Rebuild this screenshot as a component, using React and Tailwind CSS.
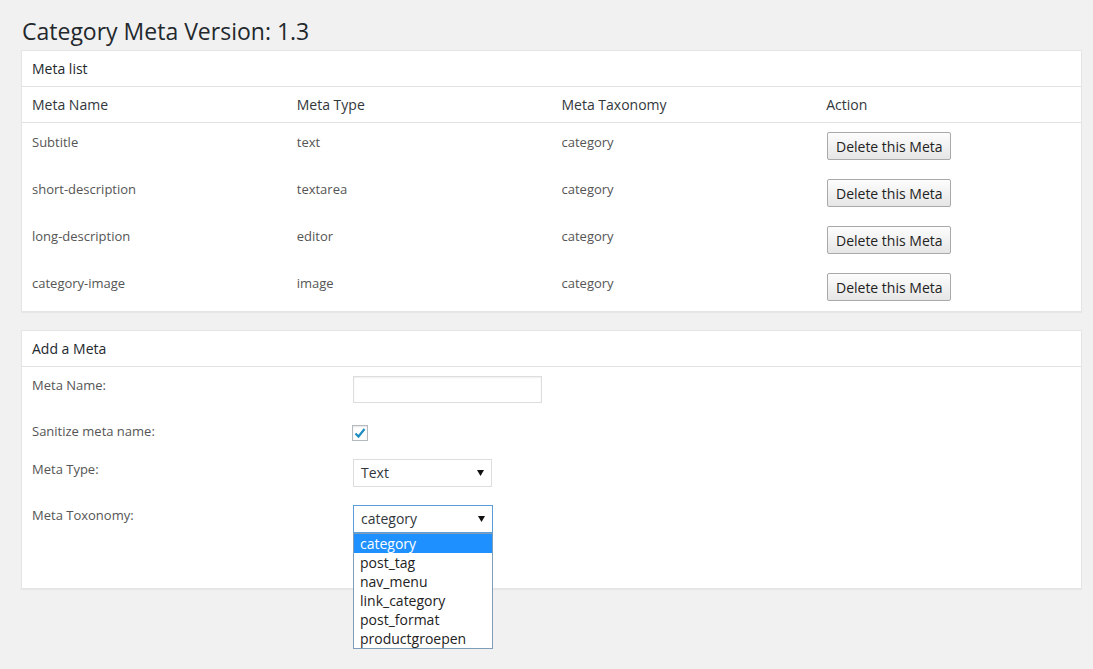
const metas = [
  { name: 'Subtitle', type: 'text', tax: 'category' },
  { name: 'short-description', type: 'textarea', tax: 'category' },
  { name: 'long-description', type: 'editor', tax: 'category' },
  { name: 'category-image', type: 'image', tax: 'category' },
]

const taxonomies = ['category', 'post_tag', 'nav_menu', 'link_category', 'post_format', 'productgroepen']

function Arrow() {
  return (
    <svg width="7" height="6" viewBox="0 0 7 6" className="shrink-0">
      <path d="M0 0 H7 L3.5 6 Z" fill="#111" />
    </svg>
  )
}

function Select({ value, focused, width, children }) {
  return (
    <div className="relative" style={{ width }}>
      <div
        className={`h-[28px] flex items-center justify-between pl-[7px] pr-[7px] bg-white text-[14px] text-[#32373c] border ${
          focused ? 'border-[#5b9dd9]' : 'border-[#ddd]'
        }`}
      >
        <span className="pt-px">{value}</span>
        <Arrow />
      </div>
      {children}
    </div>
  )
}

export default function App() {
  return (
    <div
      className="min-h-screen bg-[#f1f1f1] pl-[21px] pr-[11px] pb-10 text-[#555]"
      style={{ fontFamily: '"Open Sans", "Noto Sans", sans-serif' }}
    >
      <h1 className="pt-[14px] mb-[2px] text-[23px] leading-[34px] text-[#23282d] font-normal pl-px">
        Category Meta Version: 1.3
      </h1>

      {/* Meta list */}
      <div className="bg-white border border-[#e5e5e5] shadow-[0_1px_1px_rgba(0,0,0,0.04)]">
        <div className="h-[36px] border-b border-[#e1e1e1] pl-[10px] text-[14px] leading-[35px] text-[#23282d]">
          Meta list
        </div>
        <div className="grid grid-cols-4 h-[36px] border-b border-[#e1e1e1] text-[14px] leading-[35px] text-[#32373c]">
          <div className="px-[10px]">Meta Name</div>
          <div className="px-[10px]">Meta Type</div>
          <div className="px-[10px]">Meta Taxonomy</div>
          <div className="px-[10px]">Action</div>
        </div>
        {metas.map((m) => (
          <div key={m.name} className="grid grid-cols-4 h-[47px] text-[13px] leading-[19.5px]">
            <div className="px-[10px] pt-[10px]">{m.name}</div>
            <div className="px-[10px] pt-[10px]">{m.type}</div>
            <div className="px-[10px] pt-[10px]">{m.tax}</div>
            <div className="px-[10px] pt-[9px]">
              <button className="ml-px h-[28px] w-[124px] pt-px rounded-[2px] border border-[#a9a9a9] bg-gradient-to-b from-[#fdfdfd] to-[#e6e6e6] text-[14px] text-[#222]">
                Delete this Meta
              </button>
            </div>
          </div>
        ))}
      </div>

      {/* Add a Meta */}
      <div className="mt-[18px] bg-white border border-[#e5e5e5] shadow-[0_1px_1px_rgba(0,0,0,0.04)] pb-[55px]">
        <div className="h-[36px] border-b border-[#e1e1e1] pl-[10px] text-[14px] leading-[35px] text-[#23282d]">
          Add a Meta
        </div>
        <div className="text-[13px] leading-[19.5px]">
          <div className="flex items-start">
            <div className="w-[331px] pl-[10px] mt-[9px]">Meta Name:</div>
            <div className="mt-[9px] w-[189px] h-[27px] border border-[#ddd] bg-white shadow-[inset_0_1px_2px_rgba(0,0,0,0.07)]" />
          </div>
          <div className="flex items-start mt-[18px]">
            <div className="w-[330px] pl-[10px] mt-px">Sanitize meta name:</div>
            <div className="mt-[4px] w-[16px] h-[16px] border border-[#b4b9be] bg-white flex items-center justify-center shadow-[inset_0_1px_2px_rgba(0,0,0,0.1)]">
              <svg width="12" height="12" viewBox="0 0 12 12">
                <path d="M1.5 6.5 L4.5 9.5 L10.5 2" fill="none" stroke="#1e8cbe" strokeWidth="2.2" />
              </svg>
            </div>
          </div>
          <div className="flex items-start mt-[17px]">
            <div className="w-[331px] pl-[10px] mt-px">Meta Type:</div>
            <Select value="Text" width={139} />
          </div>
          <div className="flex items-start mt-[18px]">
            <div className="w-[331px] pl-[10px] mt-px">Meta Toxonomy:</div>
            <Select value="category" focused width={140}>
              <div className="absolute left-0 top-full w-full border border-[#7f9db9] bg-white text-[14px] leading-[19px] text-[#222] z-10">
                {taxonomies.map((t, i) => (
                  <div key={t} className={`pl-[6px] ${i === 0 ? 'bg-[#1e90ff] text-white' : ''}`}>
                    {t}
                  </div>
                ))}
              </div>
            </Select>
          </div>
        </div>
      </div>
    </div>
  )
}
